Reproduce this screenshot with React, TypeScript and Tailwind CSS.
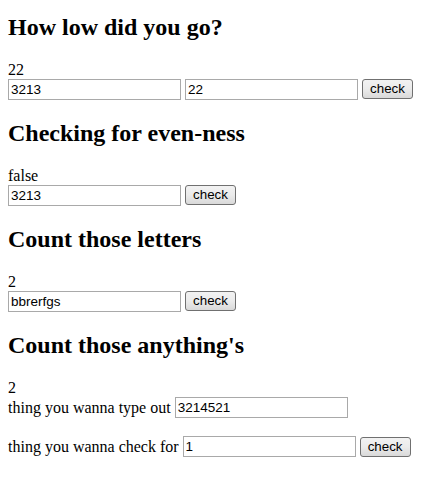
import React from "react";

function Field({ value, w = "w-[173px]" }: { value: string; w?: string }) {
  return (
    <input
      readOnly
      value={value}
      className={`${w} h-[21px] shrink-0 border border-[#a9a9a9] bg-white px-[2px] font-['Liberation_Sans',Arial,sans-serif] text-[13.5px] leading-[19px] text-black outline-none`}
    />
  );
}

function Btn() {
  return (
    <button className="h-[20px] w-[51px] shrink-0 rounded-[3px] border border-[#707070] bg-gradient-to-b from-[#f2f2f2] via-[#ebebeb] to-[#d9d9d9] font-['Liberation_Sans',Arial,sans-serif] text-[13.33px] leading-[18px] text-black">
      check
    </button>
  );
}

function H({ children }: { children: React.ReactNode }) {
  return <h2 className="mb-[20px] text-[24px] font-bold leading-[28px]">{children}</h2>;
}

export default function App() {
  return (
    <div className="min-h-[491px] bg-white px-2 pt-[13px] font-['Liberation_Serif','Times_New_Roman',serif] text-[16px] text-black">
      <section className="mb-[19px]">
        <H>How low did you go?</H>
        <div className="leading-[18px]">22</div>
        <div className="flex h-[21px] items-start gap-[4px]">
          <Field value="3213" />
          <Field value="22" />
          <Btn />
        </div>
      </section>
      <section className="mb-[19px]">
        <H>Checking for even-ness</H>
        <div className="leading-[18px]">false</div>
        <div className="flex h-[21px] items-start gap-[4px]">
          <Field value="3213" />
          <Btn />
        </div>
      </section>
      <section className="mb-[19px]">
        <H>Count those letters</H>
        <div className="leading-[18px]">2</div>
        <div className="flex h-[21px] items-start gap-[4px]">
          <Field value="bbrerfgs" />
          <Btn />
        </div>
      </section>
      <section>
        <H>Count those anything's</H>
        <div className="leading-[18px]">2</div>
        <div className="flex h-[21px] items-center gap-[4px]">
          <span className="leading-[18px]">thing you wanna type out</span>
          <Field value="3214521" />
        </div>
        <div className="mt-[18px] flex h-[21px] items-center gap-[4px]">
          <span className="leading-[18px]">thing you wanna check for</span>
          <Field value="1" />
          <Btn />
        </div>
      </section>
    </div>
  );
}
